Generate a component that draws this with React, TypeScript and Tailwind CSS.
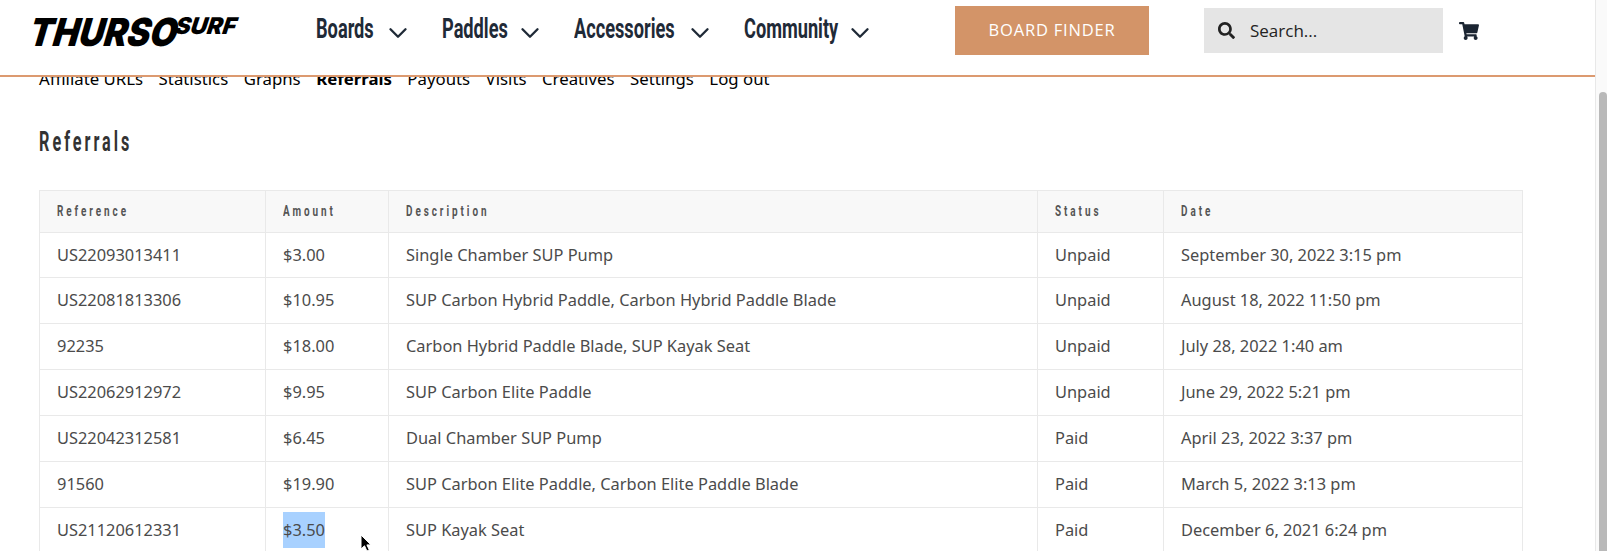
import type { ReactNode } from 'react';
import { ChevronDown } from 'lucide-react';
import { FaSearch, FaShoppingCart } from 'react-icons/fa';

const navItems = [
  { label: 'Boards', box: 'w-[67px]', width: 'w-[126px]' },
  { label: 'Paddles', box: 'w-[73px]', width: 'w-[132px]' },
  { label: 'Accessories', box: 'w-[111px]', width: 'w-[170px]' },
  { label: 'Community', box: 'w-[101px]', width: 'w-[211px]' },
];

const subNav = ['Affiliate URLs', 'Statistics', 'Graphs', 'Referrals', 'Payouts', 'Visits', 'Creatives', 'Settings', 'Log out'];

const rows = [
  ['US22093013411', '$3.00', 'Single Chamber SUP Pump', 'Unpaid', 'September 30, 2022 3:15 pm'],
  ['US22081813306', '$10.95', 'SUP Carbon Hybrid Paddle, Carbon Hybrid Paddle Blade', 'Unpaid', 'August 18, 2022 11:50 pm'],
  ['92235', '$18.00', 'Carbon Hybrid Paddle Blade, SUP Kayak Seat', 'Unpaid', 'July 28, 2022 1:40 am'],
  ['US22062912972', '$9.95', 'SUP Carbon Elite Paddle', 'Unpaid', 'June 29, 2022 5:21 pm'],
  ['US22042312581', '$6.45', 'Dual Chamber SUP Pump', 'Paid', 'April 23, 2022 3:37 pm'],
  ['91560', '$19.90', 'SUP Carbon Elite Paddle, Carbon Elite Paddle Blade', 'Paid', 'March 5, 2022 3:13 pm'],
  ['US21120612331', '$3.50', 'SUP Kayak Seat', 'Paid', 'December 6, 2021 6:24 pm'],
];

const headers = ['Reference', 'Amount', 'Description', 'Status', 'Date'];

// no condensed font is installed, so Roboto gets squeezed horizontally
function Condensed({ className, children }: { className: string; children: ReactNode }) {
  return <span className={`inline-block origin-left whitespace-nowrap font-['Roboto',sans-serif] font-bold ${className}`}>{children}</span>;
}

function Logo() {
  return (
    <div className="flex w-[316px] shrink-0 items-start pt-[14px] pl-[28px] text-black">
      <div className="w-[148px] shrink-0">
        <span className="inline-block origin-left skew-x-[-18deg] scale-x-[0.9] whitespace-nowrap pl-[3px] font-['Inter',sans-serif] text-[38.5px] leading-[36px] font-black">
          THURSO
        </span>
      </div>
      <span className="block skew-x-[-18deg] font-['Inter',sans-serif] text-[23px] leading-[24px] font-black">SURF</span>
    </div>
  );
}

export default function App() {
  return (
    <div className="flex h-[551px] w-[1607px] overflow-hidden bg-white font-['Noto_Sans',sans-serif]">
      <div className="w-[1595px] shrink-0">
        <header className="relative z-10 flex h-[77px] items-start border-b-[2px] border-[#dc9a70] bg-white">
          <Logo />
          <nav className="flex pt-[10px]">
            {navItems.map((item) => (
              <div key={item.label} className={`flex items-center ${item.width}`}>
                <div className={`shrink-0 ${item.box}`}>
                  <Condensed className="scale-x-[0.65] text-[28px] leading-[32px] text-[#1f2a37]">{item.label}</Condensed>
                </div>
                <ChevronDown className="mt-[8px] shrink-0 text-[#1f2a37]" size={30} strokeWidth={1.9} />
              </div>
            ))}
          </nav>
          <a className="mt-[6px] flex h-[49px] w-[194px] shrink-0 items-center justify-center bg-[#d39468] font-['Open_Sans',sans-serif] text-[16.5px] tracking-[0.8px] text-white">
            BOARD FINDER
          </a>
          <div className="mt-[8px] ml-[55px] flex h-[45px] w-[239px] shrink-0 items-center bg-[#e5e5e5] pl-[14px] font-['Open_Sans',sans-serif] text-[17px] text-[#222]">
            <FaSearch className="text-[#222]" size={17} />
            <span className="ml-[15px]">Search...</span>
          </div>
          <FaShoppingCart className="mt-[21px] ml-[16px] text-[#1b2532]" size={20} />
        </header>

        <main className="-mt-[8px] px-[39px]">
          <ul className="flex h-[20px] gap-[15.5px] text-[16.8px] leading-[20px] text-black">
            {subNav.map((item) => (
              <li key={item} className={item === 'Referrals' ? 'font-bold' : ''}>{item}</li>
            ))}
          </ul>
          <h2 className="mt-[39px] h-[28px] text-[#333]">
            <Condensed className="scale-x-[0.6] text-[27px] leading-[28px] tracking-[5px]">Referrals</Condensed>
          </h2>
          <table className="mt-[33.5px] w-[1484px] table-fixed border-collapse text-[16.4px] text-[#4b4b4b]">
            <colgroup>
              <col className="w-[226px]" />
              <col className="w-[123px]" />
              <col className="w-[649px]" />
              <col className="w-[126px]" />
              <col />
            </colgroup>
            <thead>
              <tr className="h-[42px] bg-[#f8f8f8]">
                {headers.map((h) => (
                  <th key={h} className="border border-[#e9e9e9] pl-[17px] text-left">
                    <Condensed className="scale-x-[0.64] text-[15.5px] tracking-[4.6px] text-[#555]">{h}</Condensed>
                  </th>
                ))}
              </tr>
            </thead>
            <tbody>
              {rows.map((row) => (
                <tr key={row[0]} className="h-[45.85px]">
                  {row.map((cell, i) => (
                    <td key={i} className="border border-[#e9e9e9] pl-[17px]">
                      {cell === '$3.50' ? <span className="inline-block bg-[#a8d1ff] py-[6px]">{cell}</span> : cell}
                    </td>
                  ))}
                </tr>
              ))}
            </tbody>
          </table>
        </main>
      </div>

      {/* scrollbar */}
      <div className="w-[12px] shrink-0 border-l border-[#e8e8e8] bg-[#fafafa] pt-[92px] pl-[3px]">
        <div className="h-[459px] rounded-t-[5px] bg-[#b9b9b9]" />
      </div>

      {/* mouse pointer */}
      <svg className="absolute top-[534px] left-[360px]" width="13" height="18" viewBox="0 0 13 18">
        <path d="M1 1v14l3.5-3.2 2.4 5.2 2.4-1.1-2.4-5H11z" fill="#000" stroke="#fff" strokeWidth="1" />
      </svg>
    </div>
  );
}
